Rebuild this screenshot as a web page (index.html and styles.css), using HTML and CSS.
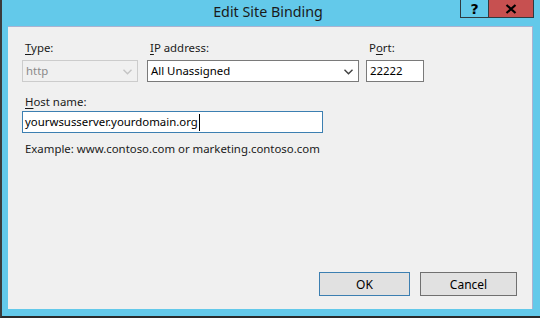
FILE: index.html
```html
<!DOCTYPE html>
<html>
<head>
<meta charset="utf-8">
<link rel="stylesheet" href="styles.css">
</head>
<body>
<div class="window">
  <div class="titlebar">
    <div class="title">Edit Site Binding</div>
    <div class="caption-buttons">
      <div class="cap-btn help">?</div>
      <div class="cap-btn close">
        <svg width="12" height="10" viewBox="0 0 12 10"><path d="M1.5 1 L10.5 9 M10.5 1 L1.5 9" stroke="#000" stroke-width="2.2" fill="none"/></svg>
      </div>
    </div>
  </div>
  <div class="client">
    <div class="fields">
      <div class="field f-type">
        <label class="lbl"><u>T</u>ype:</label>
        <div class="select disabled">
          <span>http</span>
          <svg class="chev" width="9" height="6" viewBox="0 0 9 6"><path d="M0.5 0.8 L4.5 4.8 L8.5 0.8" stroke="#c4c4c4" stroke-width="1.4" fill="none"/></svg>
        </div>
      </div>
      <div class="field f-ip">
        <label class="lbl"><u>I</u>P address:</label>
        <div class="select">
          <span>All Unassigned</span>
          <svg class="chev" width="9" height="6" viewBox="0 0 9 6"><path d="M0.5 0.8 L4.5 4.8 L8.5 0.8" stroke="#404040" stroke-width="1.4" fill="none"/></svg>
        </div>
      </div>
      <div class="field f-port">
        <label class="lbl">P<u>o</u>rt:</label>
        <div class="textbox">22222</div>
      </div>
    </div>
    <div class="host">
      <label class="lbl host-lbl"><u>H</u>ost name:</label>
      <div class="textbox focused">yourwsusserver.yourdomain.org<span class="caret"></span></div>
      <div class="example">Example: www.contoso.com or marketing.contoso.com</div>
    </div>
    <div class="spacer"></div>
    <div class="buttons">
      <button class="btn default">OK</button>
      <button class="btn">Cancel</button>
    </div>
  </div>
</div>
</body>
</html>
```
FILE: styles.css
```css
html, body {
  margin: 0;
  padding: 0;
}
body {
  width: 540px;
  height: 318px;
  overflow: hidden;
  background: #63c9ea;
  font-family: "Noto Sans", "Open Sans", sans-serif;
  font-size: 11.4px;
  color: #000;
}
.window {
  box-sizing: border-box;
  width: 540px;
  height: 318px;
  border-left: 2px solid #3b3b3b;
  border-bottom: 2px solid #2a2a2a;
  display: flex;
  flex-direction: column;
}
.titlebar {
  height: 26px;
  display: flex;
  align-items: flex-start;
  flex: none;
}
.title {
  flex: 1;
  text-align: center;
  font-size: 14.3px;
  line-height: 24px;
  padding-left: 74px;
  color: #1a1a1a;
}
.caption-buttons {
  display: flex;
  margin-right: 6px;
}
.cap-btn {
  box-sizing: border-box;
  height: 18px;
  display: flex;
  align-items: center;
  justify-content: center;
  border: 1px solid #2f3a40;
  border-top: none;
}
.help {
  width: 28px;
  border-right: none;
  font-weight: bold;
  font-size: 14px;
  font-family: "DejaVu Sans", sans-serif;
  color: #000;
}
.close {
  width: 46px;
  background: #c75050;
}
.client {
  flex: none;
  margin-left: 6px;
  width: 525px;
  height: 283px;
  box-sizing: border-box;
  background: #f0f0f0;
  border-top: 1px solid #a9b3d2;
  border-right: 1px solid #a9b3d2;
  padding: 13px 15px 13px 14px;
  display: flex;
  flex-direction: column;
}
.fields {
  display: flex;
}
.field {
  display: flex;
  flex-direction: column;
}
.f-type { width: 116px; margin-right: 9px; }
.f-ip { width: 212px; margin-right: 7px; }
.f-port { width: 58px; }
.lbl {
  display: block;
  padding-left: 3px;
  line-height: 16px;
  height: 20px;
  color: #1a1a1a;
}
.lbl u {
  text-decoration-thickness: 1px;
  text-underline-offset: 2px;
}
.select, .textbox {
  box-sizing: border-box;
  height: 22px;
  border: 1px solid #7a7a7a;
  background: #fff;
  display: flex;
  align-items: center;
  padding-left: 3px;
  padding-right: 5px;
  line-height: 18px;
  white-space: nowrap;
}
.select span { flex: 1; }
.select.disabled {
  border-color: #cccccc;
  color: #8a8a8a;
  background: #f0f0f0;
}
.chev { flex: none; margin-top: 1px; }
.host {
  margin-top: 9px;
  display: flex;
  flex-direction: column;
}
.host-lbl {
  box-sizing: border-box;
  padding-top: 3px;
  height: 20px;
}
.textbox.focused {
  width: 301px;
  border-color: #3c7fb1;
  padding-left: 2px;
}
.caret {
  display: inline-block;
  width: 1px;
  height: 17px;
  background: #000;
  margin-left: 1px;
}
.example {
  margin-top: 8px;
  padding-left: 3px;
  line-height: 16px;
  color: #1a1a1a;
}
.spacer { flex: 1; }
.buttons {
  display: flex;
  justify-content: flex-end;
  gap: 10px;
}
.btn {
  box-sizing: border-box;
  width: 91px;
  height: 24px;
  font-family: inherit;
  font-size: 12px;
  color: #000;
  background: #e1e1e1;
  border: 1px solid #707070;
  border-radius: 0;
  padding: 0;
  margin: 0;
}
.btn + .btn { width: 97px; }
.btn.default {
  border-color: #3c7fb1;
}
```
